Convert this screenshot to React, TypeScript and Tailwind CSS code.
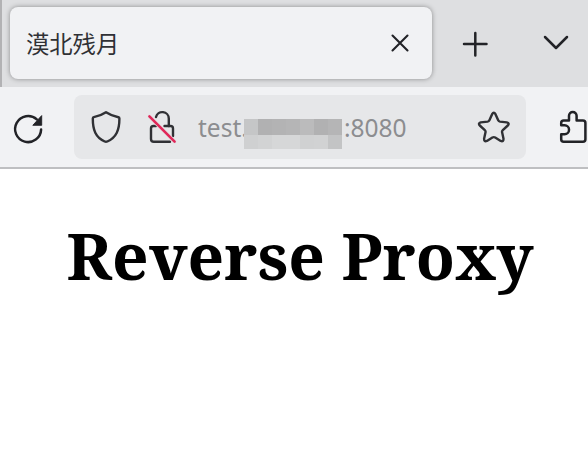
import React from "react";

const ink = "#222327";

function ReloadIcon() {
  return (
    <svg className="mt-1 h-[32px] w-[32px] shrink-0" viewBox="12 113 32 32" fill="none">
      <path d="M41.1 129.6A13 13 0 1 1 36.8 119.400" stroke={ink} strokeWidth="2.500" strokeLinecap="round" />
      <path d="M41.700 115.600V125.300H32.800Z" fill={ink} stroke={ink} strokeWidth="0.900" strokeLinejoin="round" />
    </svg>
  );
}

function ShieldIcon() {
  return (
    <svg className="h-[34px] w-[32px] shrink-0" viewBox="90 110 32 34" fill="none" stroke="#303135" strokeWidth="2.400" strokeLinejoin="round">
      <path d="M106 112.200Q100.500 115.800 93.800 117.200Q92.800 117.400 92.800 118.500C92.800 130 95.500 137.200 104.700 141.500Q106 142.100 107.300 141.500C116.500 137.200 119.400 130 119.400 118.500Q119.400 117.400 118.400 117.200Q111.500 115.800 106 112.200Z" />
    </svg>
  );
}

function InsecureLockIcon() {
  return (
    <svg className="h-[36px] w-[32px] shrink-0" viewBox="146 109 32 36" fill="none" strokeLinecap="round" strokeLinejoin="round">
      <path d="M156 117A6.500 6.500 0 0 1 168.800 118.500V126H170.500Q173 126 173 128.500V136" stroke="#303135" strokeWidth="2.400" />
      <path d="M156 126H153.500Q151 126 151 128.500V139Q151 141.800 153.800 141.800H170M164.500 126H169" stroke="#303135" strokeWidth="2.400" />
      <path d="M149.400 116.400L174.600 141.600" stroke="#e3e0e3" strokeWidth="4" />
      <path d="M149.400 116.400L174.600 141.600" stroke="#e0285a" strokeWidth="2.600" />
    </svg>
  );
}

function StarIcon() {
  return (
    <svg className="h-[34px] w-[34px] shrink-0" viewBox="477 110 34 34" fill="none" stroke="#303135" strokeWidth="2.400" strokeLinejoin="round">
      <path d="M492.100 114.200Q493.800 111.400 495.500 114.200L498.200 120.300Q498.700 121.400 500 121.600L506.800 122.400Q509.800 123.200 507.800 125.500L502.800 130.100Q501.800 131 502.100 132.300L503.500 138.800Q503.600 142 500.700 140.900L495.200 137.500Q493.800 136.700 492.400 137.500L486.900 140.900Q484 142 484.100 138.800L485.500 132.300Q485.800 131 484.800 130.100L479.800 125.500Q477.800 123.200 480.800 122.400L487.600 121.600Q488.900 121.400 489.400 120.300Z" />
    </svg>
  );
}

function PuzzleIcon() {
  return (
    <svg className="h-[36px] w-[30px] shrink-0" viewBox="558 109 30 36" fill="none" stroke={ink} strokeWidth="2.500" strokeLinejoin="round">
      <path d="M561.200 125.300V123Q561.200 120.500 563.700 120.500H569V115.700A3.800 3.800 0 0 1 576.600 115.700V120.500H582.900Q585.400 120.500 585.400 123V139.300Q585.400 141.800 582.900 141.800H563.700Q561.200 141.800 561.200 139.300V134.200H564.600A4.450 4.450 0 0 0 564.600 125.300Z" />
    </svg>
  );
}

function TabStrip() {
  return (
    <div className="flex h-[87px] border-l-2 border-[#b2b2b4] bg-[#dedfe1] pl-2 pt-[7px]">
      <div className="flex h-[72px] w-[422px] shrink-0 items-center justify-between rounded-lg bg-[#f1f2f4] pl-4 pr-[22px] shadow-[0_0_5px_rgba(0,0,0,0.38)]">
        <span className="pt-[3px] text-[23.300px] leading-none text-[#303135]">漠北残月</span>
        <svg className="h-5 w-5" viewBox="0 0 20 20" stroke={ink} strokeWidth="2.100" strokeLinecap="round">
          <path d="M2.500 2.500L17.500 17.500M17.500 2.500L2.500 17.500" />
        </svg>
      </div>
      <svg className="ml-[30px] mt-6 h-[26px] w-[26px] shrink-0" viewBox="0 0 26 26" stroke={ink} strokeWidth="2.500" strokeLinecap="round">
        <path d="M2 13H24.500M13.300 2V24.500" />
      </svg>
      <svg className="ml-[54px] mt-[25px] h-5 w-7 shrink-0" viewBox="0 0 28 20" fill="none" stroke={ink} strokeWidth="2.500" strokeLinecap="round" strokeLinejoin="round">
        <path d="M3 5L14 16L25 5" />
      </svg>
    </div>
  );
}

function MaskedHost() {
  return (
    <span className="grid h-[30px] w-[98px] shrink-0 grid-cols-7 grid-rows-[16px_14px]">
      <i className="bg-[#c5c6c7]" />
      <i className="bg-[#b1b1b2]" />
      <i className="bg-[#b3b3b4]" />
      <i className="bg-[#b5b5b6]" />
      <i className="bg-[#bbbbbc]" />
      <i className="bg-[#b1b1b2]" />
      <i className="bg-[#b5b5b6]" />
      <i className="bg-[#cfd0d1]" />
      <i className="bg-[#d2d3d4]" />
      <i className="bg-[#d6d7d8]" />
      <i className="bg-[#d6d7d8]" />
      <i className="bg-[#d0d1d2]" />
      <i className="bg-[#d1d2d3]" />
      <i className="bg-[#c3c4c5]" />
    </span>
  );
}

function Toolbar() {
  return (
    <div className="flex h-[82px] items-center overflow-hidden border-b-2 border-[#bebfc1] bg-[#f1f2f4] pl-3">
      <ReloadIcon />
      <div className="ml-[30px] flex h-16 w-[452px] shrink-0 items-center rounded-lg bg-[#e6e7e9] pl-4">
        <ShieldIcon />
        <span className="ml-6 flex"><InsecureLockIcon /></span>
        <div className="ml-5 flex w-[279px] items-center text-[24.500px] leading-[32px] text-[#8c8d90]">
          <span className="w-[46px] shrink-0 pt-[2px]">test.</span>
          <span className="mt-[14px] flex"><MaskedHost /></span>
          <span className="ml-[2px] pt-[2px]">:8080</span>
        </div>
        <StarIcon />
      </div>
      <span className="ml-8 flex"><PuzzleIcon /></span>
    </div>
  );
}

export default function App() {
  return (
    <div className="h-[458px] w-[588px] overflow-hidden bg-white font-['Noto_Sans','Noto_Sans_CJK_SC',sans-serif]">
      <TabStrip />
      <Toolbar />
      <main className="flex justify-center pl-3 pt-[43px]">
        <h1 className="whitespace-nowrap font-['Noto_Serif','DejaVu_Serif_Condensed','DejaVu_Serif',serif] text-[64px] font-bold leading-[87px] text-black">Reverse Proxy</h1>
      </main>
    </div>
  );
}
